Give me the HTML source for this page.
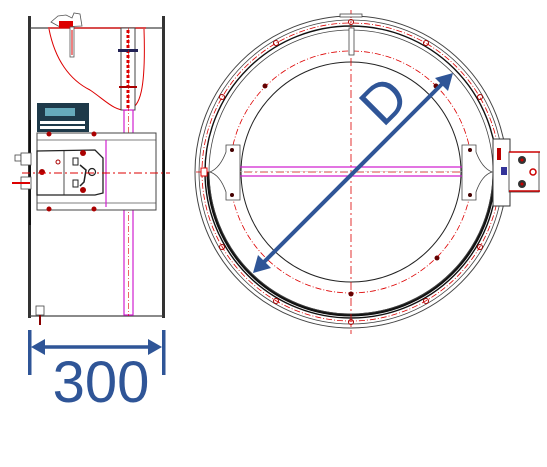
<!DOCTYPE html>
<html><head><meta charset="utf-8"><style>
html,body{margin:0;padding:0;background:#fff;}
svg{display:block;}
</style></head><body>
<svg width="547" height="467" viewBox="0 0 547 467" xmlns="http://www.w3.org/2000/svg">
<g>
  <rect x="28" y="16" width="3" height="302" fill="#333"/>
  <rect x="162" y="16" width="3" height="302" fill="#333"/>
  <rect x="29" y="120" width="2" height="105" fill="#111"/>
  <rect x="163" y="150" width="2" height="80" fill="#111"/>
  <line x1="30" y1="28" x2="163" y2="28" stroke="#444" stroke-width="1.2"/>
  <line x1="30" y1="316" x2="163" y2="316" stroke="#444" stroke-width="1.2"/>
  <line x1="48" y1="28" x2="146" y2="28" stroke="#d00" stroke-width="1.2"/>
  <path d="M49,29 C55,60 70,80 90,90 C105,100 115,112 128,110 C140,108 146,90 144,29" fill="none" stroke="#d00" stroke-width="1"/>
  <path d="M51,22 L58,16 L66,15 L72,18 L74,13 L80,14 L82,26 L60,27 Z" fill="#fff" stroke="#555" stroke-width="0.8"/>
  <rect x="59" y="21" width="14" height="7" fill="#d00"/>
  <rect x="70" y="27" width="4" height="30" fill="#fff" stroke="#555" stroke-width="0.8"/>
  <line x1="72" y1="30" x2="72" y2="55" stroke="#d00" stroke-width="1"/>
  <rect x="121" y="28" width="14" height="82" fill="#fff" stroke="#444" stroke-width="1"/>
  <line x1="128" y1="30" x2="128" y2="108" stroke="#d00" stroke-width="3" stroke-dasharray="3,2"/>
  <rect x="118" y="49" width="20" height="3" fill="#225"/>
  <rect x="119" y="86" width="18" height="2" fill="#a00"/>
  <rect x="124" y="110" width="9" height="205" fill="none" stroke="#d020d0" stroke-width="1.2"/>
  <line x1="128.5" y1="28" x2="128.5" y2="316" stroke="#d00" stroke-width="0.6" stroke-dasharray="6,2,1,2"/>
  <rect x="37" y="103" width="52" height="29" fill="#1e3a4a"/>
  <rect x="45" y="108" width="30" height="8" fill="#6ab"/>
  <rect x="40" y="121" width="45" height="3" fill="#fff"/>
  <rect x="40" y="126" width="45" height="3" fill="#fff"/>
  <rect x="37" y="133" width="119" height="77" fill="#fff" stroke="#444" stroke-width="1"/>
  <line x1="37" y1="140" x2="156" y2="140" stroke="#555" stroke-width="0.8"/>
  <line x1="37" y1="203" x2="156" y2="203" stroke="#555" stroke-width="0.8"/>
  <circle cx="49" cy="134" r="2.5" fill="#a00"/><circle cx="94" cy="134" r="2.5" fill="#a00"/>
  <circle cx="49" cy="209" r="2.5" fill="#a00"/><circle cx="94" cy="209" r="2.5" fill="#a00"/>
  <line x1="106" y1="140" x2="106" y2="207" stroke="#d020d0" stroke-width="1.2"/>
  <path d="M37,151 L95,150 L103,158 L103,193 L95,195 L37,195 Z" fill="#fff" stroke="#222" stroke-width="1.3"/>
  <line x1="64" y1="150" x2="64" y2="195" stroke="#222" stroke-width="0.8"/>
  <circle cx="58" cy="162" r="2" fill="none" stroke="#a00"/>
  <circle cx="83" cy="153" r="3" fill="#a00"/><circle cx="83" cy="190" r="3" fill="#a00"/>
  <circle cx="92" cy="172" r="3.5" fill="none" stroke="#222" stroke-width="1.2"/>
  <path d="M80,165 L86,170 L84,182 L80,186" fill="none" stroke="#222" stroke-width="1.5"/>
  <rect x="73" y="158" width="5" height="7" fill="none" stroke="#222"/>
  <rect x="73" y="180" width="5" height="7" fill="none" stroke="#222"/>
  <circle cx="42" cy="172" r="3" fill="#a00"/>
  <rect x="15" y="155" width="6" height="6" fill="#fff" stroke="#444" stroke-width="0.8"/>
  <rect x="21" y="153" width="10" height="12" fill="#fff" stroke="#444" stroke-width="0.8"/>
  <rect x="21" y="177" width="10" height="12" fill="#fff" stroke="#444" stroke-width="0.8"/>
  <line x1="12" y1="183" x2="30" y2="183" stroke="#d00" stroke-width="2"/>
  <line x1="22" y1="173" x2="170" y2="173" stroke="#d00" stroke-width="1" stroke-dasharray="8,3,2,3"/>
  <rect x="36" y="306" width="8" height="9" fill="#fff" stroke="#444" stroke-width="0.8"/>
  <line x1="40" y1="315" x2="40" y2="325" stroke="#800" stroke-width="2"/>
  <rect x="28" y="330" width="3.5" height="45" fill="#2f5597"/>
  <rect x="162" y="330" width="3.5" height="45" fill="#2f5597"/>
  <line x1="38" y1="347" x2="155" y2="347" stroke="#2f5597" stroke-width="3.5"/>
  <path d="M31,347 L45,339 L45,355 Z" fill="#2f5597"/>
  <path d="M162,347 L148,339 L148,355 Z" fill="#2f5597"/>
  <text x="101" y="402" text-anchor="middle" font-family="Liberation Sans, sans-serif" font-size="58" fill="#2f5597">300</text>
</g>
<g>
  <circle cx="351" cy="172" r="156" fill="none" stroke="#444" stroke-width="1"/>
  <circle cx="351" cy="172" r="152" fill="none" stroke="#444" stroke-width="0.8"/>
  <circle cx="351" cy="172" r="149" fill="none" stroke="#d00" stroke-width="0.8" stroke-dasharray="6,2,1,2"/>
  <circle cx="351" cy="172" r="146" fill="none" stroke="#111" stroke-width="1.4"/>
  <path d="M208,172 A143,143 0 0 0 494,172" fill="none" stroke="#111" stroke-width="3"/>
  <circle cx="351" cy="172" r="142" fill="none" stroke="#444" stroke-width="0.8"/>
  <circle cx="351" cy="172" r="121" fill="none" stroke="#d00" stroke-width="0.8" stroke-dasharray="6,2,1,2"/>
  <circle cx="351" cy="172" r="110" fill="none" stroke="#222" stroke-width="1"/>
  <line x1="351" y1="10" x2="351" y2="334" stroke="#d00" stroke-width="0.8" stroke-dasharray="8,3,2,3"/>
  <line x1="196" y1="172" x2="506" y2="172" stroke="#d00" stroke-width="0.8" stroke-dasharray="8,3,2,3"/>
  <rect x="340" y="14" width="22" height="3" fill="#fff" stroke="#444" stroke-width="0.8"/>
  <rect x="349" y="28" width="5" height="27" fill="#fff" stroke="#444" stroke-width="0.8"/>
  <g fill="none" stroke="#a00" stroke-width="1">
    <circle cx="351" cy="22" r="2.5"/><circle cx="351" cy="322" r="2.5"/>
    <circle cx="276" cy="43" r="2.5"/><circle cx="426" cy="43" r="2.5"/>
    <circle cx="222" cy="97" r="2.5"/><circle cx="480" cy="97" r="2.5"/>
    <circle cx="222" cy="247" r="2.5"/><circle cx="480" cy="247" r="2.5"/>
    <circle cx="276" cy="301" r="2.5"/><circle cx="426" cy="301" r="2.5"/>
  </g>
  <g fill="#600">
    <circle cx="265" cy="86" r="2.5"/><circle cx="436" cy="86" r="2.5"/>
    <circle cx="437" cy="258" r="2.5"/><circle cx="351" cy="294" r="2.5"/>
  </g>
  <path d="M226,145 L240,145 L240,200 L226,200 L226,192 Q220,175 210,172 Q220,168 226,152 Z" fill="#fff" stroke="#444" stroke-width="0.8"/>
  <path d="M476,145 L462,145 L462,200 L476,200 L476,192 Q482,175 492,172 Q482,168 476,152 Z" fill="#fff" stroke="#444" stroke-width="0.8"/>
  <circle cx="232" cy="150" r="2" fill="#400"/><circle cx="232" cy="195" r="2" fill="#400"/>
  <circle cx="470" cy="150" r="2" fill="#400"/><circle cx="470" cy="195" r="2" fill="#400"/>
  <line x1="240" y1="167" x2="462" y2="167" stroke="#d020d0" stroke-width="1.2"/>
  <line x1="240" y1="176" x2="462" y2="176" stroke="#d020d0" stroke-width="1.2"/>
  <line x1="240" y1="171.5" x2="462" y2="171.5" stroke="#bbb" stroke-width="0.6" stroke-dasharray="3,2"/>
  <rect x="201" y="168" width="6" height="8" fill="#fff" stroke="#d00" stroke-width="1"/>
  <rect x="493" y="139" width="17" height="67" fill="#fff" stroke="#333" stroke-width="1"/>
  <rect x="509" y="152" width="30" height="40" fill="#fff" stroke="#333" stroke-width="0.8"/>
  <line x1="509" y1="152" x2="540" y2="152" stroke="#c00" stroke-width="1.5"/>
  <line x1="509" y1="191" x2="540" y2="191" stroke="#c00" stroke-width="1.5"/>
  <circle cx="522" cy="160" r="4" fill="#333"/><circle cx="522" cy="160" r="1.5" fill="#c00"/>
  <circle cx="522" cy="184" r="4" fill="#333"/><circle cx="522" cy="184" r="1.5" fill="#c00"/>
  <circle cx="533" cy="172" r="3" fill="none" stroke="#c00" stroke-width="1.5"/>
  <rect x="497" y="148" width="4" height="12" fill="#b00"/>
  <rect x="501" y="167" width="6" height="8" fill="#339"/>
  <line x1="262" y1="264" x2="444" y2="82" stroke="#2f5597" stroke-width="4"/>
  <path d="M253,273 L258,255 L271,268 Z" fill="#2f5597"/>
  <path d="M453,73 L448,91 L435,78 Z" fill="#2f5597"/>
  <text x="383" y="120" text-anchor="middle" font-family="Liberation Sans, sans-serif" font-size="56" fill="#2f5597" transform="rotate(-45 383 100)">D</text>
</g>
</svg>
</body></html>
